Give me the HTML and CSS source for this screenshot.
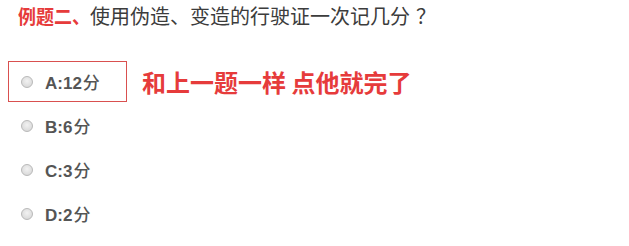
FILE: index.html
```html
<!DOCTYPE html>
<html lang="zh-CN">
<head>
<meta charset="utf-8">
<link rel="stylesheet" href="styles.css">
</head>
<body>
<div class="page">
  <div class="title"><span class="tag">例题二、</span><span class="q">使用伪造、变造的行驶证一次记几分<span class="qm">？</span></span></div>
  <ul class="options">
    <li class="row">
      <label class="opt boxed"><span class="radio"></span><span class="txt">A:12<span class="unit">分</span></span></label>
      <span class="note">和上一题一样 点他就完了</span>
    </li>
    <li class="row">
      <label class="opt"><span class="radio"></span><span class="txt">B:6<span class="unit">分</span></span></label>
    </li>
    <li class="row">
      <label class="opt"><span class="radio"></span><span class="txt">C:3<span class="unit">分</span></span></label>
    </li>
    <li class="row">
      <label class="opt"><span class="radio"></span><span class="txt">D:2<span class="unit">分</span></span></label>
    </li>
  </ul>
</div>
</body>
</html>
```
FILE: styles.css
```css
html, body {
  margin: 0;
  padding: 0;
  background: #ffffff;
}
.page {
  width: 629px;
  height: 246px;
  overflow: hidden;
  font-family: "Liberation Sans", "Noto Sans CJK SC", sans-serif;
}
.title {
  display: flex;
  align-items: center;
  height: 30px;
  padding-left: 18px;
  white-space: nowrap;
}
.tag {
  color: #e63b3b;
  font-weight: bold;
  font-size: 18px;
  font-family: "Noto Sans CJK SC", sans-serif;
  transform: scaleY(1.1);
}
.q {
  color: #3c3c3c;
  font-size: 20px;
  font-family: "Noto Sans CJK SC", sans-serif;
}
.qm {
  margin-left: 6px;
}
.options {
  list-style: none;
  margin: 29.5px 0 0 0;
  padding: 0;
}
.row {
  display: flex;
  align-items: center;
  height: 44px;
  padding-left: 8px;
}
.opt {
  box-sizing: border-box;
  display: flex;
  align-items: center;
  width: 119px;
  height: 41px;
  border: 1px solid transparent;
  padding-left: 12px;
}
.opt.boxed {
  border-color: #d9504f;
}
.radio {
  box-sizing: border-box;
  width: 12px;
  height: 12px;
  border-radius: 50%;
  border: 1px solid #b9b9b9;
  background: radial-gradient(circle at 50% 40%, #f2f2f2 0%, #dcdcdc 70%, #cfcfcf 100%);
  flex: none;
}
.txt {
  margin-left: 12px;
  color: #555555;
  font-weight: bold;
  font-size: 17px;
  white-space: nowrap;
}
.unit {
  font-family: "Noto Sans CJK SC", sans-serif;
  font-weight: 500;
  margin-left: 1px;
}
.note {
  margin-left: 15px;
  color: #e63b3b;
  font-weight: bold;
  font-size: 24px;
  font-family: "Noto Sans CJK SC", sans-serif;
  white-space: nowrap;
}
```
